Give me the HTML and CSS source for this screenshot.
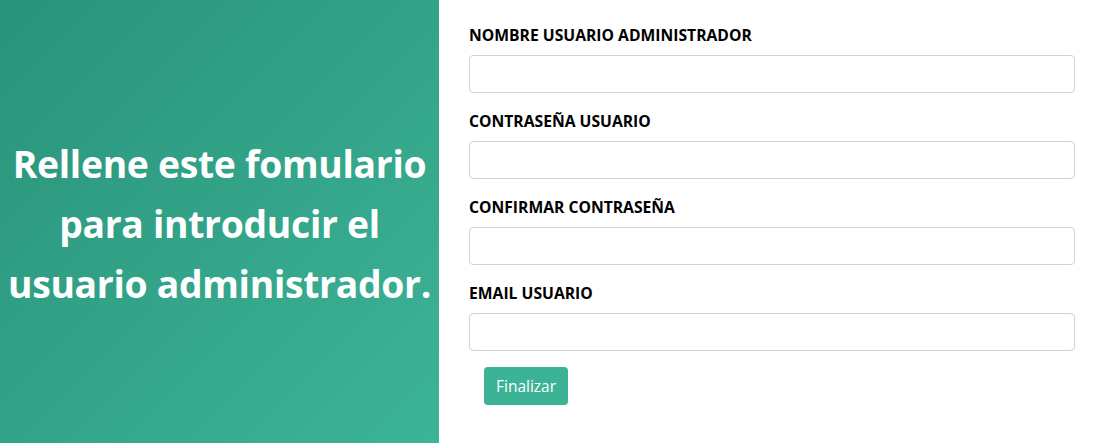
FILE: index.html
```html
<!DOCTYPE html>
<html lang="es">
<head>
<meta charset="utf-8">
<title>Usuario administrador</title>
<link rel="stylesheet" href="styles.css">
</head>
<body>
<div class="page">
  <aside class="intro">
    <h1 class="intro-title">Rellene este fomulario para introducir el usuario administrador.</h1>
  </aside>
  <main class="form-side">
    <form class="form">
      <div class="group">
        <label class="label" for="nombre">NOMBRE USUARIO ADMINISTRADOR</label>
        <input class="input" id="nombre" type="text">
      </div>
      <div class="group">
        <label class="label" for="pass">CONTRASEÑA USUARIO</label>
        <input class="input" id="pass" type="password">
      </div>
      <div class="group">
        <label class="label" for="pass2">CONFIRMAR CONTRASEÑA</label>
        <input class="input" id="pass2" type="password">
      </div>
      <div class="group group-last">
        <label class="label" for="email">EMAIL USUARIO</label>
        <input class="input" id="email" type="email">
      </div>
      <div class="actions">
        <button class="btn" type="button">Finalizar</button>
      </div>
    </form>
  </main>
</div>
</body>
</html>
```
FILE: styles.css
```css
* { box-sizing: border-box; }
html, body { margin: 0; padding: 0; }
body {
  font-family: "Open Sans", "Noto Sans", "Liberation Sans", sans-serif;
  color: #000;
  background: #fff;
}
.page {
  display: flex;
  width: 1093px;
  height: 443px;
}
.intro {
  width: 439px;
  flex: none;
  display: flex;
  align-items: center;
  justify-content: center;
  padding-top: 5px;
  background: linear-gradient(135deg, #29937a 0%, #3db497 100%);
}
.intro-title {
  margin: 0;
  color: #fff;
  font-size: 37.3px;
  line-height: 60px;
  font-weight: 700;
  text-align: center;
  letter-spacing: -0.3px;
}
.form-side {
  flex: 1;
  padding: 25px 18px 0 30px;
}
.form { display: flex; flex-direction: column; }
.group {
  display: flex;
  flex-direction: column;
  margin-bottom: 18px;
}
.group-last { margin-bottom: 16px; }
.label {
  font-size: 15.7px;
  line-height: 21px;
  font-weight: 700;
  margin-bottom: 9px;
}
.input {
  height: 38px;
  border: 1px solid #ced4da;
  border-radius: 4px;
  background: #fff;
  font: inherit;
}
.actions { padding-left: 15px; }
.btn {
  height: 38px;
  padding: 0 12px;
  border: none;
  border-radius: 4px;
  background: #3cb396;
  color: #fff;
  font-family: inherit;
  font-size: 15.5px;
}
```
